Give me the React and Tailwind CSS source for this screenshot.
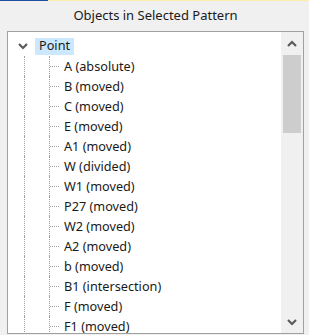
import React from "react";

const items = [
  "A (absolute)",
  "B (moved)",
  "C (moved)",
  "E (moved)",
  "A1 (moved)",
  "W (divided)",
  "W1 (moved)",
  "P27 (moved)",
  "W2 (moved)",
  "A2 (moved)",
  "b (moved)",
  "B1 (intersection)",
  "F (moved)",
  "F1 (moved)",
];

function Chevron({ up }) {
  return (
    <svg width="10" height="7" viewBox="0 0 10 7">
      <path
        d={up ? "M1 6 L5 2 L9 6" : "M1 1 L5 5 L9 1"}
        fill="none"
        stroke="#5a5a5a"
        strokeWidth="2.2"
      />
    </svg>
  );
}

export default function App() {
  return (
    <div
      className="w-[309px] h-[335px] bg-[#f0f0f0] overflow-hidden flex flex-col"
      style={{ fontFamily: '"Noto Sans", "Segoe UI", sans-serif' }}
    >
      <div className="flex h-[1px] shrink-0">
        <div className="w-[48px] bg-[#1d4f9e]" />
        <div className="flex-1 bg-[#fbeea8]" />
      </div>
      <div className="h-[30px] shrink-0 flex items-center justify-center text-[13px] text-[#1a1a1a] pl-[2px]">
        Objects in Selected Pattern
      </div>
      <div className="ml-[7px] w-[297px] h-[303px] border border-[#a0a0a0] bg-white flex">
        <div className="flex-1 pt-[4px] overflow-hidden text-[12.7px] text-[#1a1a1a]">
          <div className="h-[20px] flex items-center">
            <div className="w-[10px] ml-[10px] flex items-center">
              <Chevron />
            </div>
            <div className="ml-[7px] h-[17px] px-[4px] bg-[#cce8ff] flex items-center">
              Point
            </div>
          </div>
          {items.map((t) => (
            <div key={t} className="h-[20px] flex">
              <div className="w-[16px] shrink-0" />
              <div className="w-[25px] shrink-0 border-l border-dotted border-[#a0a0a0]" />
              <div className="w-[15px] shrink-0 border-l border-dotted border-[#a0a0a0] flex items-center">
                <div className="w-[9px] border-t border-dotted border-[#a0a0a0]" />
              </div>
              <div className="flex items-center whitespace-nowrap leading-none">{t}</div>
            </div>
          ))}
        </div>
        <div className="w-[22px] shrink-0 bg-[#f0f0f0] flex flex-col">
          <div className="h-[23px] flex items-center justify-center">
            <Chevron up />
          </div>
          <div className="mx-[2px] h-[78px] bg-[#cdcdcd]" />
          <div className="flex-1" />
          <div className="h-[22px] flex items-center justify-center">
            <Chevron />
          </div>
        </div>
      </div>
    </div>
  );
}
